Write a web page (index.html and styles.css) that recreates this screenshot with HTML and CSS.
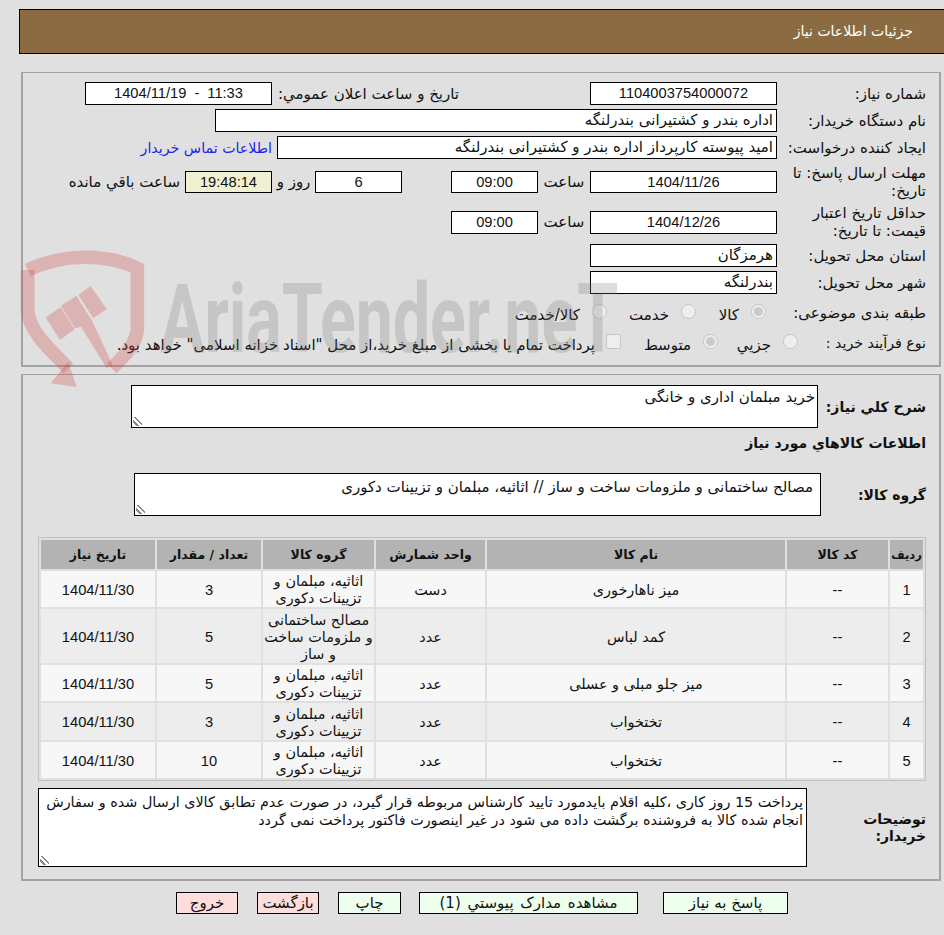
FILE: index.html
```html
<!DOCTYPE html>
<html lang="fa" dir="rtl">
<head>
<meta charset="utf-8">
<title>جزئیات اطلاعات نیاز</title>
<link rel="stylesheet" href="styles.css">
</head>
<body>
<header class="title-bar">جزئیات اطلاعات نیاز</header>

<section class="panel panel-top">
  <div class="row h23">
    <div class="label">شماره نیاز:</div>
    <div class="box num w187">1104003754000072</div>
    <div class="label gap131">تاريخ و ساعت اعلان عمومي:</div>
    <div class="box num w187 ltr">1404/11/19 - 11:33</div>
  </div>
  <div class="row h23">
    <div class="label">نام دستگاه خریدار:</div>
    <div class="box w562">اداره بندر و کشتیرانی بندرلنگه</div>
  </div>
  <div class="row h23">
    <div class="label">ایجاد کننده درخواست:</div>
    <div class="box w500">امید پیوسته کارپرداز اداره بندر و کشتیرانی بندرلنگه</div>
    <a class="link" href="#">اطلاعات تماس خریدار</a>
  </div>
  <div class="row h37">
    <div class="label">مهلت ارسال پاسخ: تا تاریخ:</div>
    <div class="box num w187 h22">1404/11/26</div>
    <div class="word w52">ساعت</div>
    <div class="box num w87 h22">09:00</div>
    <div class="spacer49"></div>
    <div class="box num w87 h22">6</div>
    <div class="word w43">روز و</div>
    <div class="box num w87 h22 timer">19:48:14</div>
    <div class="word w5 nowrap">ساعت باقي مانده</div>
  </div>
  <div class="row h36">
    <div class="label">حداقل تاریخ اعتبار قیمت: تا تاریخ:</div>
    <div class="box num w187">1404/12/26</div>
    <div class="word w52">ساعت</div>
    <div class="box num w87">09:00</div>
  </div>
  <div class="row h23">
    <div class="label">استان محل تحویل:</div>
    <div class="box w187">هرمزگان</div>
  </div>
  <div class="row h23">
    <div class="label">شهر محل تحویل:</div>
    <div class="box w187">بندرلنگه</div>
  </div>
  <div class="row h30 no-gap-bottom">
    <div class="label">طبقه بندی موضوعی:</div>
    <label class="opt o1"><input type="radio" name="cat" checked disabled><span>كالا</span></label>
    <label class="opt o2"><input type="radio" name="cat" disabled><span>خدمت</span></label>
    <label class="opt o3"><input type="radio" name="cat" disabled><span>كالا/خدمت</span></label>
  </div>
  <div class="row h30">
    <div class="label label-short">نوع فرآيند خريد :</div>
    <label class="opt o4"><input type="radio" name="proc" disabled><span>جزيي</span></label>
    <label class="opt o5"><input type="radio" name="proc" checked disabled><span>متوسط</span></label>
    <label class="opt o6"><input type="checkbox" disabled><span>پرداخت تمام يا بخشی از مبلغ خرید،از محل "اسناد خزانه اسلامی" خواهد بود.</span></label>
  </div>
</section>

<section class="panel panel-main">
  <div class="need-row">
    <div class="strong">شرح كلي نياز:</div>
    <textarea class="area area-need" readonly>خرید مبلمان اداری و خانگی</textarea>
  </div>
  <h2 class="strong heading">اطلاعات كالاهاي مورد نياز</h2>
  <div class="group-row">
    <div class="strong">گروه کالا:</div>
    <textarea class="area area-group" readonly>مصالح ساختمانی و ملزومات ساخت و ساز // اثاثیه، مبلمان و تزیینات دکوری</textarea>
  </div>

  <table class="items">
    <colgroup>
      <col class="c1"><col class="c2"><col class="c3"><col class="c4"><col class="c5"><col class="c6"><col class="c7">
    </colgroup>
    <thead>
      <tr><th class="th-first">رديف</th><th>کد کالا</th><th>نام کالا</th><th>واحد شمارش</th><th>گروه کالا</th><th>تعداد / مقدار</th><th>تاریخ نیاز</th></tr>
    </thead>
    <tbody>
      <tr><td class="num">1</td><td class="num">--</td><td>میز ناهارخوری</td><td>دست</td><td>اثاثیه، مبلمان و تزیینات دکوری</td><td class="num">3</td><td class="num">1404/11/30</td></tr>
      <tr class="triple"><td class="num">2</td><td class="num">--</td><td>کمد لباس</td><td>عدد</td><td>مصالح ساختمانی و ملزومات ساخت و ساز</td><td class="num">5</td><td class="num">1404/11/30</td></tr>
      <tr><td class="num">3</td><td class="num">--</td><td>میز جلو مبلی و عسلی</td><td>عدد</td><td>اثاثیه، مبلمان و تزیینات دکوری</td><td class="num">5</td><td class="num">1404/11/30</td></tr>
      <tr class="tall"><td class="num">4</td><td class="num">--</td><td>تختخواب</td><td>عدد</td><td>اثاثیه، مبلمان و تزیینات دکوری</td><td class="num">3</td><td class="num">1404/11/30</td></tr>
      <tr><td class="num">5</td><td class="num">--</td><td>تختخواب</td><td>عدد</td><td>اثاثیه، مبلمان و تزیینات دکوری</td><td class="num">10</td><td class="num">1404/11/30</td></tr>
    </tbody>
  </table>

  <div class="notes-row">
    <div class="strong notes-label">توضیحات خریدار:</div>
    <textarea class="area area-notes" readonly>پرداخت 15 روز کاری ،کلیه اقلام بایدمورد تایید کارشناس مربوطه قرار گیرد، در صورت عدم تطابق کالای ارسال شده و سفارش انجام شده کالا به فروشنده برگشت داده می شود در غیر اینصورت فاکتور پرداخت نمی گردد</textarea>
  </div>
</section>

<nav class="actions">
  <button class="btn ok b-reply" type="button">پاسخ به نیاز</button>
  <button class="btn ok b-docs" type="button">مشاهده مدارک پیوستي (1)</button>
  <button class="btn ok b-print" type="button">چاپ</button>
  <button class="btn no b-back" type="button">بازگشت</button>
  <button class="btn no b-exit" type="button">خروج</button>
</nav>

<svg class="watermark" viewBox="0 0 1920 510" aria-hidden="true">
  <g fill="none" stroke="#d04d4d" stroke-opacity=".3" stroke-width="41">
    <path d="M83 90C190 40 320 40 412 85V270C405 320 370 350 335 385"/>
    <path d="M83 90V215C90 270 130 310 205 385"/>
  </g>
  <g fill="#d04d4d" fill-opacity=".3">
    <path d="M137 232L182 202L224 268L180 300Z"/>
    <path d="M183 197L229 167L275 240L338 375L320 385L243 260L225 265Z"/>
    <path d="M235 165L272 138L320 207L280 235Z"/>
    <path d="M152 430L205 365L230 441Z"/>
  </g>
  <text class="wm-text" x="480" y="335" textLength="1375" lengthAdjust="spacingAndGlyphs">AriaTender.neT</text>
</svg>
</body>
</html>
```

FILE: styles.css
```css
* { box-sizing: border-box; }
html, body { margin: 0; padding: 0; }
body {
  position: relative;
  height: 935px;
  overflow: hidden;
  background: #e0e0e0;
  color: #111;
  font: 15px/18px "DejaVu Sans", sans-serif;
}
.title-bar {
  height: 45px;
  margin: 9px 0 0 19px;
  padding-right: 31px;
  background: #8b6c42;
  border: 1px solid #000;
  border-right: 0;
  color: #fff;
  font-size: 14px;
  line-height: 43px;
}
.panel {
  margin: 0 3px 0 21px;
  border: 1px solid #a3a3a3;
  border-width: 1px 2px 2px 2px;
  padding-right: 13px;
}
.panel-top {
  height: 295px;
  margin-top: 18px;
  padding-top: 9px;
  display: flex;
  flex-direction: column;
  gap: 4px;
}
.row { display: flex; align-items: center; flex: none; }
.h23 { height: 23px; }
.h37 { height: 37px; }
.h36 { height: 36px; }
.h30 { height: 30px; }
.no-gap-bottom { margin-bottom: -4px; }
.label { width: 149px; flex: none; }
.label-short { width: 128px; font-size: 14.2px; }
.gap131 { width: 187px; margin-right: 131px; white-space: nowrap; }
.box {
  height: 23px;
  flex: none;
  padding: 0 3px;
  border: 1px solid #000;
  background: #fff;
  line-height: 21px;
  white-space: nowrap;
}
.h22 { height: 22px; line-height: 20px; }
.num { font-family: "Liberation Sans", "DejaVu Sans", sans-serif; font-size: 14.67px; text-align: center; }
.ltr { direction: ltr; word-spacing: 4px; }
.w187 { width: 187px; }
.w87 { width: 87px; }
.w562 { width: 562px; }
.w500 { width: 500px; }
.link { margin-right: 5px; color: #2222ee; font-size: 14.2px; text-decoration: none; white-space: nowrap; }
.word { flex: none; text-align: center; }
.w52 { width: 52px; }
.w43 { width: 43px; }
.w5 { margin-right: 5px; }
.nowrap { white-space: nowrap; }
.spacer49 { width: 49px; flex: none; }
.timer { background: #f0f0d2; }
.opt { display: flex; align-items: center; flex: none; white-space: nowrap; }
.opt input {
  width: 15px;
  height: 15px;
  margin: 0 0 3px 12px;
  flex: none;
}
.opt span { margin-top: 3px; }
.o1 { width: 70px; margin-right: 11px; }
.o2 { width: 89px; }
.o3 { width: 90px; }
.o4 { width: 80px; }
.o5 { width: 97px; }
.o6 { width: auto; }
.o6 input { margin-left: 11px; }
.panel-main {
  height: 507px;
  margin-top: 7px;
  padding-top: 10px;
}
.strong { font-weight: 700; font-size: 14px; white-space: nowrap; }
.need-row { display: flex; align-items: center; height: 43px; }
.need-row .strong { width: 108px; flex: none; }
.heading { margin: 3px 0 0; height: 24px; line-height: 24px; }
.group-row { display: flex; align-items: center; height: 43px; margin-top: 18px; }
.group-row .strong { width: 105px; flex: none; }
.area {
  display: block;
  flex: none;
  height: 43px;
  margin: 0;
  padding: 2px 2px 1px;
  border: 1px solid #000;
  border-radius: 0;
  outline: 0;
  background: #fff;
  color: #111;
  font: 15px/18px "DejaVu Sans", sans-serif;
}
.area::-webkit-resizer {
  background: linear-gradient(45deg, transparent 22%, #888 22% 34%, transparent 34% 52%, #888 52% 64%, transparent 64%) left 1px bottom 1px / 9px 9px no-repeat;
}
.area-need { width: 687px; }
.area-group { width: 687px; padding: 4px 7px 3px; }
.items {
  width: 888px;
  margin: 21px 0 0 0;
  table-layout: fixed;
  border: 1px solid #c0c0c0;
  border-spacing: 2px;
  border-collapse: separate;
  font-size: 14.4px;
}
.c1 { width: 33px; }
.c2 { width: 101px; }
.c3 { width: 298px; }
.c4 { width: 109px; }
.c5 { width: 111px; }
.c6 { width: 104px; }
.c7 { width: 114px; }
.items th {
  height: 29px;
  padding: 0;
  background: #b3b3b3;
  font-weight: 700;
  font-size: 12.5px;
}
.items .th-first { font-size: 11.5px; }
.items td {
  height: 36px;
  padding: 2px 0 0;
  text-align: center;
  line-height: 17px;
}
.items .tall td { height: 37px; }
.items .triple td { height: 54px; }
.items tbody tr:nth-child(odd) td { background: #f7f7f7; }
.items tbody tr:nth-child(even) td { background: #ededed; }
.notes-row { display: flex; align-items: center; margin-top: 7px; }
.notes-label { width: 119px; flex: none; padding-left: 40px; white-space: normal; line-height: 17px; }
.area-notes { width: 769px; height: 79px; padding: 4px 3px 4px 1px; font-size: 14.35px; }
.actions { display: flex; margin: 11px 156px 0 0; }
.btn {
  height: 22px;
  margin: 0;
  padding: 0;
  border: 1px solid #000;
  border-radius: 0;
  color: #111;
  font: 15px/18px "DejaVu Sans", sans-serif;
}
.ok { background: #eeffee; }
.no { background: #ffdddd; }
.b-reply { width: 125px; margin-left: 25px; }
.b-docs { width: 219px; margin-left: 18px; word-spacing: 2px; }
.b-print { width: 63px; margin-left: 19px; }
.b-back { width: 62px; margin-left: 19px; }
.b-exit { width: 62px; }
.watermark {
  position: absolute;
  left: 0;
  top: 240px;
  width: 640px;
  height: 170px;
  pointer-events: none;
}
.wm-text {
  direction: ltr;
  font-family: Roboto, sans-serif;
  font-weight: 700;
  font-size: 290px;
  fill: #777;
  fill-opacity: .25;
}
```
